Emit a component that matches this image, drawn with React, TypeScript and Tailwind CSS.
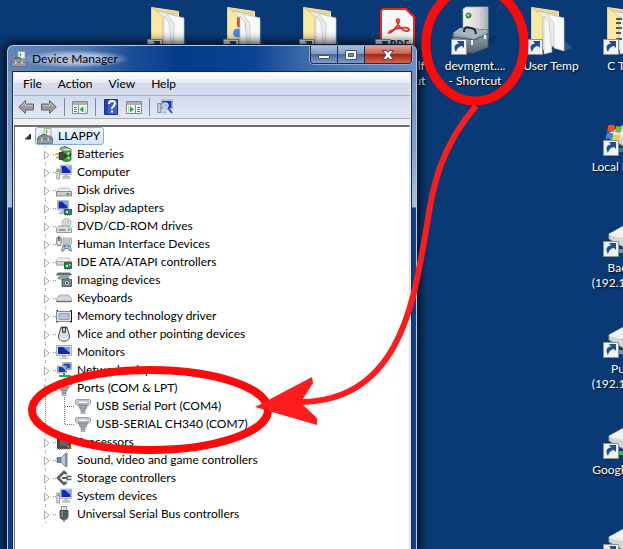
import React from 'react';

interface RowProps {
  icon: React.ReactNode;
  label: string;
  last?: boolean;
}

interface ShortcutProps {
  icon: React.ReactNode;
  lines: string[];
  className: string;
}

/* ---------- Tree icons ---------- */

const Screen = () => (
  <g>
    <path d="M4.500 1h11v9.500h-11z" fill="#d5d9dc" stroke="#9ca3a8" strokeWidth=".7" />
    <path d="M5.500 2h9v7h-9z" fill="#1029b8" />
    <path d="M9 2h5.500v5z" fill="#8ba9f2" />
    <path d="M8.500 10.500h3v2h-3z" fill="#aeb4b8" />
    <path d="M6.500 12.500h7.500v2H6.500z" fill="#c9cdd0" stroke="#a0a6aa" strokeWidth=".5" />
  </g>
);

const Connector = () => (
  <g>
    <path d="M.5 2.500 2 1.500h12l1.500 1v3L14 7H2L.5 5.500z" fill="#d3d7da" stroke="#858c91" strokeWidth=".8" />
    <path d="M3 3h10v2.500H3z" fill="#f4f6f7" stroke="#8f969b" strokeWidth=".6" />
    <path d="M3.500 7h9l-1.500 4H5z" fill="#9aa2a8" stroke="#747b80" strokeWidth=".7" />
    <path d="M6 11h4v4.500H6z" fill="#b9bfc3" stroke="#83898e" strokeWidth=".6" />
    <path d="M6 13h4" stroke="#737a80" />
  </g>
);

const Drive = () => (
  <g>
    <path d="M3.500 6h9L15 9v4.500H1V9z" fill="#eceeee" stroke="#9da1a3" strokeWidth=".7" />
    <path d="M.5 9.500h15v4.500H.5z" fill="#c9cccd" stroke="#74797b" strokeWidth=".8" />
    <path d="M10.500 11h3v2h-3z" fill="#25c52d" />
  </g>
);

const icons: Record<string, React.ReactNode> = {
  root: (
    <g>
      <path d="M7 .5h7v8H7z" fill="#eff1f1" stroke="#999fa2" strokeWidth=".8" />
      <path d="M9.500 2v3.500" stroke="#43b33e" strokeWidth="1.200" />
      <path d="M4 8.500C4 6 10 6 10 8.500" fill="none" stroke="#4c5357" strokeWidth="1.200" />
      <path d="M2 8h12l1.500 2.500v5H.5v-5z" fill="#949da4" stroke="#626a70" strokeWidth=".8" />
      <path d="M.5 11h15" stroke="#5e676d" />
      <path d="M4 10.500h1.500v2H4zM10.500 10.500H12v2h-1.500z" fill="#e8ecee" />
    </g>
  ),
  battery: (
    <g>
      <path d="M4 4c1-4 6-4 8-2" fill="none" stroke="#5c6468" strokeWidth="1.200" />
      <path d="M6 3.500c0-2 9-2 9 0v10c0 2.500-9 2.500-9 0z" fill="#2da838" stroke="#226527" strokeWidth=".8" />
      <ellipse cx="10.500" cy="3.500" rx="4.500" ry="1.500" fill="#cfeccf" stroke="#578558" strokeWidth=".6" />
      <path d="M12.500 6v7" stroke="#a4f0a0" strokeWidth="1.800" />
      <path d="M3 6.500h4L10 9v2l-3 2.500H3z" fill="#45484a" stroke="#222" strokeWidth=".7" />
      <path d="M10 10h3l2-2" fill="none" stroke="#222" strokeWidth="1.200" />
      <path d="M0 8h3M0 11.500h3" stroke="#d89c1d" strokeWidth="1.500" />
    </g>
  ),
  computer: (
    <g>
      <Screen />
      <path d="M.8 5h2.700v10H.8z" fill="#dadddf" stroke="#878e92" strokeWidth=".8" />
      <path d="M2.200 6v2" stroke="#41a647" />
    </g>
  ),
  disk: <Drive />,
  display: (
    <g>
      <g transform="translate(-3 -.5)">
        <Screen />
      </g>
      <path d="M8.500 9.500h7v5h-7z" fill="#27855c" stroke="#185739" strokeWidth=".8" />
      <path d="M10 11h2v2h-2z" fill="#d3dfd7" />
      <path d="M9 15.500h6" stroke="#d5a934" strokeDasharray="1 1" />
    </g>
  ),
  dvd: (
    <g>
      <circle cx="10.500" cy="5" r="4.500" fill="#dce0e3" stroke="#9a9fa2" strokeWidth=".7" />
      <path d="m10.500 5 2-4 2 2z" fill="#a3dcb0" />
      <circle cx="10.500" cy="5" r="1.300" fill="#fff" stroke="#8f9598" strokeWidth=".6" />
      <path d="M3 8h10l2.500 2v4.500H.5V10z" fill="#dadddd" stroke="#81878a" strokeWidth=".8" />
      <path d="M2.500 12h7" stroke="#51575a" />
      <path d="M12 11.500h2" stroke="#26b336" strokeWidth="1.300" />
    </g>
  ),
  hid: (
    <g>
      <path d="M7 2h8.500v6H7z" fill="#d6dadd" stroke="#969ca0" strokeWidth=".7" />
      <path d="M7.500 4h8M7.500 6h8" stroke="#858d94" strokeDasharray="1 1" />
      <rect x=".8" y=".8" width="4.400" height="9" rx="2" fill="#e3e6e8" stroke="#565d62" strokeWidth=".9" />
      <path d="M3 1v4" stroke="#2a2f33" strokeWidth="1.200" />
      <path d="M7 9h7l1.500 6-2.500-.5-1-2H9l-1.500 2.500L5.500 15z" fill="#bdc9d5" stroke="#58697b" strokeWidth=".8" />
      <path d="M7.500 10.500h2M8.500 9.500v2" stroke="#475665" strokeWidth=".7" />
      <circle cx="12.500" cy="10.500" r=".8" fill="#3977c9" />
    </g>
  ),
  ide: (
    <g>
      <path d="M2.500 4h10L15 6.500V11H.5V6.500z" fill="#f0f1f1" stroke="#a0a4a6" strokeWidth=".7" />
      <path d="M.5 7.500H15V11H.5z" fill="#d2d5d6" stroke="#888d90" strokeWidth=".7" />
      <path d="M8.500 8.500h7v6h-7z" fill="#238542" stroke="#155228" strokeWidth=".8" />
      <path d="M10 11h2v2h-2zM13 10h1.500v1.500H13z" fill="#d4e6c8" />
      <path d="M9 15.500h6" stroke="#c2a73b" strokeDasharray="1 1" />
    </g>
  ),
  imaging: (
    <g>
      <path d="M2 1h12l1.500 2H.5z" fill="#6f8185" stroke="#3e494c" strokeWidth=".7" />
      <path d="M2 5.500 5 4h8l-2 3H2z" fill="#8db8ba" stroke="#5b6b6d" strokeWidth=".6" />
      <path d="M6 7.500h3l1-1h3l1 1h1.500v7H6z" fill="#7b858d" stroke="#3e464c" strokeWidth=".8" />
      <circle cx="11" cy="11" r="2.600" fill="#e8edf0" stroke="#424b51" strokeWidth=".7" />
      <circle cx="11" cy="11" r="1.300" fill="#3a5572" />
    </g>
  ),
  keyboard: (
    <g>
      <path d="M3.500 5h9l3 4v2.500H.5V9z" fill="#e6e8e9" stroke="#8c9194" strokeWidth=".8" />
      <path d="M3.500 6.500h9M2.500 8h11M2 9.500h12" stroke="#a2a8ac" strokeWidth=".8" strokeDasharray="1 1" />
      <path d="M.5 11.500h15" stroke="#61676b" strokeWidth="1.400" />
    </g>
  ),
  memory: (
    <g>
      <path d="M.5 3.500h15v10H.5z" fill="#dfe4ef" stroke="#7b8395" />
      <path d="M3 5.500h10v6H3z" fill="#b9c4d9" stroke="#8290ad" strokeWidth=".8" />
      <path d="M2 13.500h12" stroke="#8c95a8" strokeDasharray="1 1" />
      <path d="M14 2.500h1.500v11.500H14M2 2.500H.5M2 14H.5" fill="none" stroke="#161a22" />
    </g>
  ),
  mouse: (
    <g>
      <path d="M5 1h6l2.500 9c.5 7-11.500 7-11 0z" fill="#d9dcde" stroke="#4f5559" />
      <path d="M5.500 1h5l-1 6h-3z" fill="#3a3f43" />
      <path d="M8 2v3.500" stroke="#fff" strokeWidth="1.400" />
      <path d="M4.500 10.500c0 4 7 4 7 0" fill="none" stroke="#fff" strokeWidth="1.200" />
    </g>
  ),
  monitor: (
    <g>
      <path d="M.5 1.500h15v10H.5z" fill="#d9ddda" stroke="#9aa09c" strokeWidth=".8" />
      <path d="M2 3h12v7H2z" fill="#1127b5" />
      <path d="M7 3h7v6z" fill="#7d9cf0" />
      <path d="M6 11.500h4v2H6z" fill="#a9afa9" />
      <path d="M3.500 13.500h9V15h-9z" fill="#c6cac6" />
    </g>
  ),
  network: (
    <g>
      <path d="M6.500.5h9v7h-9z" fill="#dce1e5" stroke="#8d9499" strokeWidth=".7" />
      <path d="M7.500 1.500h7v5h-7z" fill="#2448ce" />
      <path d="M1.500 4h9v7h-9z" fill="#dce1e5" stroke="#777f85" strokeWidth=".7" />
      <path d="M2.500 5h7v5h-7z" fill="#1738be" />
      <path d="M6 5h3.500v3z" fill="#91b1f8" />
      <path d="M8 11v3M3 14h12" stroke="#1fab64" strokeWidth="2" />
    </g>
  ),
  port: <Connector />,
  cpu: (
    <g>
      <path d="M1.500 1.500h13v13h-13z" fill="#45484b" stroke="#333" />
      <path d="M4 4h8v8H4z" fill="#606468" />
      <path d="M1 15h14M15 2v13" stroke="#c99a42" strokeWidth="1.500" strokeDasharray="1 1" />
      <circle cx="12.500" cy="12.500" r="1" fill="#dc9a47" />
    </g>
  ),
  sound: (
    <g>
      <path d="M1 5.500h4v5H1z" fill="#6e8290" stroke="#51616c" strokeWidth=".7" />
      <path d="m5 5.500 5-4.500v14L5 10.500z" fill="#b9c8d2" stroke="#6c7e8a" strokeWidth=".8" />
      <path d="M9 2v12l2.500 1.500V.5z" fill="#7b8f9c" />
    </g>
  ),
  storage: (
    <g fill="none" stroke="#585e62">
      <path d="M10.500 4 8 2 2 8l6 6 2.500-2" strokeWidth="2.600" />
      <path d="M6 8h5" strokeWidth="2" />
      <path d="M11 5.500v5M11 6.500h4.500M11 9.500h4.500" strokeWidth="1.300" />
    </g>
  ),
  usb: (
    <g>
      <path d="M5.500.5h5v4h-5z" fill="#e0e2e3" stroke="#777d80" strokeWidth=".8" />
      <path d="M4 4.500h8V10c0 3-2 3-2.500 3.500h-3C6 13 4 13 4 10z" fill="#565b5e" stroke="#393d3f" strokeWidth=".8" />
      <path d="M6 5v6" stroke="#909699" strokeWidth="1.300" />
      <path d="M8 13v3" stroke="#6a7073" strokeWidth="1.500" />
    </g>
  ),
};

const Glyph: React.FC<{ name: string }> = ({ name }) => (
  <svg className="w-4 h-4 shrink-0" viewBox="0 0 16 16" aria-hidden="true">
    {icons[name]}
  </svg>
);

/* ---------- Desktop icons ---------- */

const ShortcutArrow = () => (
  <g>
    <path d="M.5 33.500h15v15H.5z" fill="#eef3f6" stroke="#8c9296" />
    <path d="M5 46c-3-5-1-8 3-8.500l-2-2.500h7v7l-2-2c-3 .5-5 2-6 6z" fill="#1c4f93" />
  </g>
);

const FolderIcon: React.FC<{ chrome?: boolean; lines?: boolean }> = ({ chrome, lines }) => (
  <svg className="w-12 h-[50px]" viewBox="0 0 48 50" aria-hidden="true">
    <path d="m36 33 9 9-8 3z" fill="#2b568d" />
    <path d="m4.500 1.500 27 4V38l-17 6-10-4z" fill="#e9d48b" stroke="#f5e8ad" />
    <path d="m10 5 18 4 1 30-14 5V16z" fill="#e9ebec" stroke="#b5b8ba" strokeWidth=".6" />
    <path d="m4.500 1.500 11 9v36l-11-6z" fill="#fbe9a3" stroke="#d7bf72" strokeWidth=".6" />
    {chrome && (
      <g>
        <path d="M14 11c7 1 9 6 9 13l-9-3z" fill="#db4a3f" />
        <path d="M14 21c7 0 10 5 9 20l-9 3z" fill="#f7c338" />
        <circle cx="14.500" cy="27" r="5" fill="#4e8cd1" stroke="#e8f1f8" />
      </g>
    )}
    <path d="m17 10 5 6 3 30-8 2z" fill="#f6f7f7" stroke="#bfc3c6" strokeWidth=".7" />
    <path d="m20 8 17 4v33l-10-3V17z" fill="#f8f9f9" stroke="#c4c7ca" strokeWidth=".7" />
    {lines && <path d="M13 13h6M13 17h5M13 22h6M13 27h5M13 33h6" stroke="#292929" strokeWidth="1.500" />}
    <ShortcutArrow />
  </svg>
);

const PdfIcon = () => (
  <svg className="w-12 h-[50px]" viewBox="0 0 48 50" aria-hidden="true">
    <path d="M6 6c0-2 1-3 3-3h22l8 8v35H6z" fill="#fafafa" stroke="#ed2620" strokeWidth="2" />
    <path
      d="M14 27c4-1 11-9 10-13-1-2-3-1-2 2 2 6 8 10 11 9 3-2-1-4-6-3-5 0-12 2-13 5z"
      fill="none"
      stroke="#ea2922"
      strokeWidth="1.800"
    />
    <text x="15" y="42" fontSize="10" fontWeight="bold" fontFamily="Open Sans, sans-serif" fill="#333">PDF</text>
    <ShortcutArrow />
  </svg>
);

const ToolboxIcon = () => (
  <svg className="w-12 h-[50px]" viewBox="0 0 48 50" aria-hidden="true">
    <defs>
      <linearGradient id="tower" x2="1">
        <stop stopColor="#f5f5f4" />
        <stop offset=".7" stopColor="#d2d3d3" />
        <stop offset="1" stopColor="#a5a7a8" />
      </linearGradient>
      <linearGradient id="box" x2="0" y2="1">
        <stop stopColor="#a8b7c1" />
        <stop offset="1" stopColor="#526572" />
      </linearGradient>
    </defs>
    <path d="m37 32 10-3-10 13z" fill="#082d61" />
    <path d="M12 3 15 1h22v32H12z" fill="url(#tower)" stroke="#aeb1b3" strokeWidth=".7" />
    <path d="M30 6v25M33 6v25" stroke="#c0c2c2" />
    <circle cx="17.500" cy="9.500" r="2.500" fill="#34b229" stroke="#347b30" />
    <circle cx="17" cy="9" r=".9" fill="#c1ff91" />
    <path d="m2 28 7-6 28 2v17l-15 6-20-3z" fill="url(#box)" stroke="#52626d" />
    <path d="m2 27 7-5 28 2-14 9z" fill="#a5b6c1" />
    <path d="M2 31 23 34l14-6" fill="none" stroke="#43535e" />
    <path d="M13 26c0-6 3-5 7-4s4 1 5 6" fill="none" stroke="#24282a" strokeWidth="2" />
    <path d="M21 34v5M34 29v4" stroke="#eef1f2" strokeWidth="2" />
    <ShortcutArrow />
  </svg>
);

const NetDriveIcon: React.FC<{ flag?: boolean; green?: boolean }> = ({ flag, green }) => (
  <svg className="w-12 h-[50px]" viewBox="0 0 48 50" aria-hidden="true">
    <path d="M6 26 26 15l18 3v15L24 41 6 31z" fill="#d3d5d6" stroke="#92979a" />
    <path d="M6 26 26 15l18 3-20 11z" fill="#f1f2f2" />
    <path d="M6 26.500 24 30l20-11" fill="none" stroke="#fff" />
    <path d="M14 43h32" stroke={green ? '#26bf57' : flag ? '#317f83' : '#858e94'} strokeWidth="4" />
    {flag && (
      <g>
        <path d="M5 19c3-2 5-1 7 0l-1 6c-3-1-5-1-7 1z" fill="#e75527" />
        <path d="M13 19c3 1 5 1 7-1l-2 7c-2 1-4 1-6 0z" fill="#80b93b" />
        <path d="M3.500 27c3-2 5-1 7 0l-1 5c-3-1-5-1-7 1z" fill="#3b8ed2" />
        <path d="M12 27c2 1 4 1 6-1l-2 6c-2 1-4 1-6 0z" fill="#f6c63f" />
      </g>
    )}
    <ShortcutArrow />
  </svg>
);

const Shortcut: React.FC<ShortcutProps> = ({ icon, lines, className }) => (
  <div className={`absolute w-[76px] flex flex-col items-center gap-[2px] ${className}`}>
    {icon}
    <div className="text-center leading-[15px] text-white whitespace-nowrap [text-shadow:1px_1px_2px_#000]">
      {lines.map((line) => (
        <div key={line}>{line}</div>
      ))}
    </div>
  </div>
);

/* ---------- Device tree ---------- */

const beforePorts = [
  { icon: 'battery', label: 'Batteries' },
  { icon: 'computer', label: 'Computer' },
  { icon: 'disk', label: 'Disk drives' },
  { icon: 'display', label: 'Display adapters' },
  { icon: 'dvd', label: 'DVD/CD-ROM drives' },
  { icon: 'hid', label: 'Human Interface Devices' },
  { icon: 'ide', label: 'IDE ATA/ATAPI controllers' },
  { icon: 'imaging', label: 'Imaging devices' },
  { icon: 'keyboard', label: 'Keyboards' },
  { icon: 'memory', label: 'Memory technology driver' },
  { icon: 'mouse', label: 'Mice and other pointing devices' },
  { icon: 'monitor', label: 'Monitors' },
  { icon: 'network', label: 'Network adapters' },
];

const afterPorts = [
  { icon: 'cpu', label: 'Processors' },
  { icon: 'sound', label: 'Sound, video and game controllers' },
  { icon: 'storage', label: 'Storage controllers' },
  { icon: 'computer', label: 'System devices' },
  { icon: 'usb', label: 'Universal Serial Bus controllers' },
];

const Row: React.FC<RowProps> = ({ icon, label }) => (
  <li className="flex items-center h-[18px]">
    <svg className="w-3 h-[18px] shrink-0" viewBox="0 0 12 18" aria-hidden="true">
      <path d="M1.500 1v1M1.500 17v1" stroke="#888" />
      <path d="M.5 6v8l4.500-4z" fill="#fff" stroke="#a6a6a6" />
      <path d="M9 9.500h3" stroke="#888" strokeDasharray="1 1" />
    </svg>
    {icon}
    <span className="ml-[5px]">{label}</span>
  </li>
);

const PortRow: React.FC<RowProps> = ({ icon, label, last }) => (
  <li className="flex items-center h-[18px]">
    <svg className="w-[31px] h-[18px] shrink-0" viewBox="0 0 31 18" aria-hidden="true">
      <path d="M1.500 0v18" stroke="#888" strokeDasharray="1 1" />
      <path d={last ? 'M20.500 0v10' : 'M20.500 0v18'} stroke="#777" strokeDasharray="1 1" />
      <path d="M21 9.500h10" stroke="#777" strokeDasharray="1 1" />
    </svg>
    {icon}
    <span className="ml-[5px]">{label}</span>
  </li>
);

const DeviceTree = () => (
  <ul className="flex-1 bg-white border-t-2 border-l border-r border-t-[#6f6f6f] border-l-[#6f6f6f] border-r-[#d9d9d9] pl-[10px] text-black whitespace-nowrap">
    <li>
      <div className="flex items-center h-[18px]">
        <svg className="w-[10px] h-[18px] shrink-0" viewBox="0 0 10 18" aria-hidden="true">
          <path d="M5.500 7v5h-5z" fill="#404040" stroke="#262626" />
        </svg>
        <span className="flex items-center h-[18px] pl-px pr-[3px] rounded-[3px] border border-[#84acdd] bg-linear-to-b from-[#f0f7ff] to-[#cfe3fb]">
          <Glyph name="root" />
          <span className="ml-[5px]">LLAPPY</span>
        </span>
      </div>
      <ul className="pl-[19px]">
        {beforePorts.map((d) => (
          <Row key={d.label} icon={<Glyph name={d.icon} />} label={d.label} />
        ))}
        <Row icon={<Glyph name="port" />} label="Ports (COM & LPT)" />
        <PortRow icon={<Glyph name="port" />} label="USB Serial Port (COM4)" />
        <PortRow icon={<Glyph name="port" />} label="USB-SERIAL CH340 (COM7)" last />
        {afterPorts.map((d) => (
          <Row key={d.label} icon={<Glyph name={d.icon} />} label={d.label} />
        ))}
      </ul>
    </li>
  </ul>
);

/* ---------- Window chrome ---------- */

const Separator = () => <div className="w-px h-[18px] bg-[#7f8792]" />;

const ToolButton: React.FC<{ title: string; children: React.ReactNode }> = ({ title, children }) => (
  <button title={title} aria-label={title} className="w-4 h-4">
    <svg className="w-4 h-4" viewBox="0 0 16 16">{children}</svg>
  </button>
);

const Toolbar = () => (
  <div className="flex items-center gap-[7px] h-[23px] pl-1 border-b border-[#a9adb8] bg-linear-to-b from-[#d2daed] to-[#e2e7f5]">
    <ToolButton title="Back">
      <path d="M.7 8 7.500 1.500V5h8v6h-8v3.500z" fill="#9a9a9a" stroke="#666" />
      <path d="M3 7.500 7 4v2.500h7.500" fill="none" stroke="#c4c4c4" />
    </ToolButton>
    <ToolButton title="Forward">
      <path d="M15.300 8 8.500 1.500V5h-8v6h8v3.500z" fill="#9a9a9a" stroke="#666" />
      <path d="M13 7.500 9 4v2.500H1.500" fill="none" stroke="#c4c4c4" />
    </ToolButton>
    <Separator />
    <ToolButton title="Show/Hide Console Tree">
      <path d="M.5 2.500h15v12H.5z" fill="#fff" stroke="#85898d" />
      <path d="M1 4.500h14" stroke="#a9b0b6" strokeWidth="3" />
      <path d="M6.500 6v8" stroke="#85898d" />
      <path d="M2 8.500h3M2 10.500h3M2 12.500h3" stroke="#5c7893" />
      <path d="m11.500 7-4 3.500 4 3z" fill="#2bab2d" />
      <path d="M13.500 7v7" stroke="#c7cacc" />
    </ToolButton>
    <Separator />
    <ToolButton title="Help">
      <path d="M1.500.5h13v15h-13z" fill="#3c62cc" stroke="#1e3583" />
      <path d="M2 1h3v14H2z" fill="#2745a5" />
      <path d="M6 5c0-4 6-4 6-.5C12 7 9 7 9 10" fill="none" stroke="#fff" strokeWidth="2" />
      <path d="M8 11.500h2v2H8z" fill="#fff" />
    </ToolButton>
    <ToolButton title="Show/Hide Action Pane">
      <path d="M.5 2.500h15v12H.5z" fill="#fff" stroke="#85898d" />
      <path d="M1 4.500h14" stroke="#a9b0b6" strokeWidth="3" />
      <path d="M9.500 6v8" stroke="#85898d" />
      <path d="M11 8.500h3M11 10.500h3M11 12.500h3" stroke="#5c7893" />
      <path d="m4 7 4 3.500-4 3z" fill="#2bab2d" />
      <path d="M2.500 7v7" stroke="#c7cacc" />
    </ToolButton>
    <Separator />
    <ToolButton title="Scan for hardware changes">
      <path d="M4.500 1h11v9h-11z" fill="#dce0e4" stroke="#8e969c" strokeWidth=".8" />
      <path d="M5.500 2h9v7h-9z" fill="#1733ba" />
      <path d="M.8 4.500h3v9h-3z" fill="#cdd1d3" stroke="#70787e" strokeWidth=".8" />
      <circle cx="8.500" cy="6.500" r="2.800" fill="#9cc4f2" stroke="#e8eef5" />
      <path d="m11 9 4 5" stroke="#2f55a8" strokeWidth="2" />
      <path d="M5 12.500h5v2H5z" fill="#b7bdc1" />
    </ToolButton>
  </div>
);

const DeviceManagerWindow = () => (
  <div className="absolute left-[6px] top-[44px] bottom-0 w-[412px] flex flex-col px-[5px] rounded-t-[7px] border-t border-x border-[#0b1b33] bg-[linear-gradient(to_bottom,#6a8cbf_0px,#7d9fce_100px,#a3bbdc_150px,#a3bbdc_162px,#0b418c_163px,#0b418c_100%)] shadow-[inset_1px_1px_0_#b6c9e2,inset_-1px_0_0_#b6c9e2,0_0_10px_3px_rgba(0,0,0,0.7)]">
    <header className="flex items-start justify-between h-[25px] -mx-[4px] mt-px pl-[3px] pr-1 rounded-t-[6px] bg-[linear-gradient(to_right,#6587b8,#5078b0_18%,#1c4f98_30%,#053c8a_42%,#0a4391_60%,#3a68a9_72%,#6d8fc2)]">
      <div className="flex items-center gap-[5px] h-[26px]">
        <Glyph name="root" />
        <h1 className="-mx-3 px-3 text-black bg-[radial-gradient(closest-side,#a9bfdc_50%,transparent)]">Device Manager</h1>
      </div>
      <div className="flex h-[18px] rounded-b-[4px] border border-t-0 border-[#1c2e4d] overflow-hidden shadow-[0_0_0_1px_#8ca9d0]">
        <button aria-label="Minimize" className="w-[27px] flex items-center justify-center border-r border-[#1c2e4d] bg-[linear-gradient(to_bottom,#a9bddb,#7f9cc7_48%,#48689a_50%,#7d9fcd)]">
          <svg className="w-4 h-4" viewBox="0 0 16 16">
            <path d="M2.500 8.500h11v3h-11z" fill="#fff" stroke="#4a5363" />
          </svg>
        </button>
        <button aria-label="Maximize" className="w-[27px] flex items-center justify-center border-r border-[#1c2e4d] bg-[linear-gradient(to_bottom,#a9bddb,#7f9cc7_48%,#48689a_50%,#7d9fcd)]">
          <svg className="w-4 h-4" viewBox="0 0 16 16">
            <path d="M2.500 3.500h11v9h-11z" fill="#fff" stroke="#4a5363" />
            <path d="M5.500 6.500h5v3h-5z" fill="#6d8fc2" stroke="#4a5363" />
          </svg>
        </button>
        <button aria-label="Close" className="w-[46px] flex items-center justify-center bg-[linear-gradient(to_bottom,#dfa094,#c9604f_45%,#a52714_50%,#d0664f)]">
          <svg className="w-4 h-4" viewBox="0 0 16 16">
            <path d="M2.500 3.500h4L8 5.500l1.500-2h4L10 8l3.500 4.500h-4L8 10.500l-1.500 2h-4L6 8z" fill="#fff" stroke="#4d4650" />
          </svg>
        </button>
      </div>
    </header>
    <div className="flex-1 flex flex-col p-px pb-0 border border-b-0 border-[#14284a] bg-[#f0f0f0]">
      <nav className="flex items-center h-[23px] pl-[1px] border-b border-[#a9adb8] text-black bg-[linear-gradient(to_bottom,#fdfdff,#e6eaf5_45%,#d3daec_46%,#d6dcee)]">
        <button className="px-2">File</button>
        <button className="px-2">Action</button>
        <button className="px-2">View</button>
        <button className="px-2">Help</button>
      </nav>
      <Toolbar />
      <div className="h-[6px]" />
      <DeviceTree />
    </div>
  </div>
);

/* Red pen marks drawn over the desktop */
const Annotations = () => (
  <svg className="absolute left-0 top-0 w-[623px] h-[549px] pointer-events-none" viewBox="0 0 623 549" aria-hidden="true">
    <ellipse cx="475" cy="44" rx="49" ry="57" fill="none" stroke="#ff0a0a" strokeWidth="9" />
    <ellipse cx="150" cy="410" rx="118" ry="40" fill="none" stroke="#ff0a0a" strokeWidth="8" />
    <path d="M476 106C440 147 432 190 427 225C415 290 405 400 302 402" fill="none" stroke="#ff1c1c" strokeWidth="6" />
    <path d="m255 407 57-30 1 6-10 16v6l14 13v7z" fill="#ff1c1c" />
  </svg>
);

export default function App() {
  return (
    <main className="relative h-screen overflow-hidden bg-[#0a3a75] font-['Lato','Open_Sans',sans-serif] text-[12px] leading-[18px]">
      <Shortcut className="left-[133px] top-[6px]" icon={<FolderIcon />} lines={[]} />
      <Shortcut className="left-[209px] top-[6px]" icon={<FolderIcon chrome />} lines={[]} />
      <Shortcut className="left-[285px] top-[6px]" icon={<FolderIcon />} lines={[]} />
      <Shortcut className="left-[361px] top-[6px]" icon={<PdfIcon />} lines={['PDF itself', '- Shortcut']} />
      <Shortcut className="left-[437px] top-[6px]" icon={<ToolboxIcon />} lines={['devmgmt....', '- Shortcut']} />
      <Shortcut className="left-[513px] top-[6px]" icon={<FolderIcon />} lines={['User Temp']} />
      <Shortcut className="left-[589px] top-[6px]" icon={<FolderIcon lines />} lines={['C Temp']} />
      <Shortcut className="left-[589px] top-[107px]" icon={<NetDriveIcon flag />} lines={['Local Disk (C)']} />
      <Shortcut className="left-[589px] top-[208px]" icon={<NetDriveIcon />} lines={['Backup', '(192.168.1.2)']} />
      <Shortcut className="left-[589px] top-[309px]" icon={<NetDriveIcon />} lines={['Public', '(192.168.1.2)']} />
      <Shortcut className="left-[589px] top-[410px]" icon={<NetDriveIcon green />} lines={['Google Drive']} />
      <Shortcut className="left-[589px] top-[511px]" icon={<NetDriveIcon />} lines={[]} />
      <DeviceManagerWindow />
      <Annotations />
    </main>
  );
}
